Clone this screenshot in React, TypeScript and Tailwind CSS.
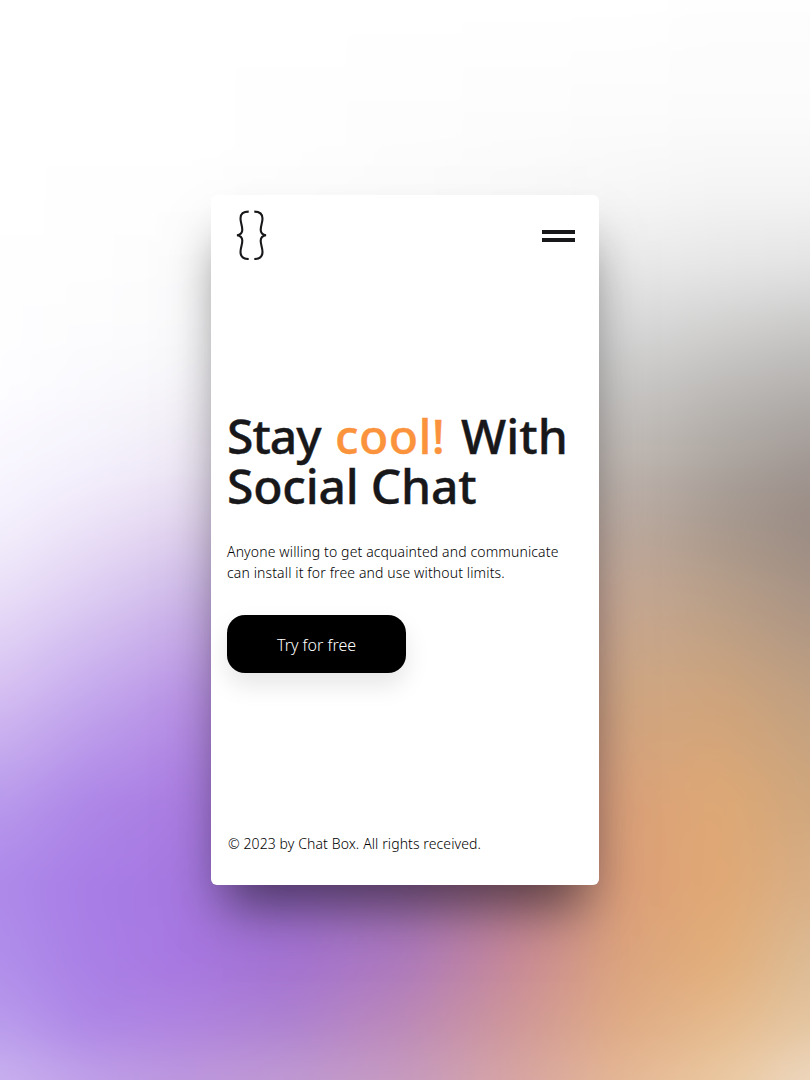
const columns = [0, 90, 180, 290, 405, 520, 620, 720, 810];

const rows: { y: number; colors: string[] }[] = [
  { y: 0, colors: ["#fff", "#fff", "#fff", "#fff", "#fff", "#fff", "#fff", "#fefefe", "#fefefe"] },
  { y: 135, colors: ["#fff", "#fff", "#fff", "#fefefe", "#fdfdfd", "#fcfcfc", "#fbfbfb", "#fafafa", "#fafafa"] },
  { y: 200, colors: ["#fff", "#fefefe", "#fefefe", "#fdfdfd", "#fbfbfb", "#f9f9f9", "#f6f6f6", "#f3f3f3", "#f3f3f3"] },
  { y: 270, colors: ["#fefefe", "#fefefe", "#fcfcfd", "#fafafa", "#f6f6f6", "#f1f1f1", "#e9e9e9", "#e5e5e5", "#e2e2e2"] },
  { y: 340, colors: ["#fefeff", "#fcfcfe", "#fafafc", "#f4f3f5", "#eeeeee", "#e4e4e4", "#d6d6d6", "#cdcccb", "#c4c3c2"] },
  { y: 400, colors: ["#fdfcff", "#f9f8fd", "#f6f4f9", "#eeeaf2", "#e2e0e3", "#d6d4d4", "#c8c6c4", "#b9b6b3", "#b0aca9"] },
  { y: 467, colors: ["#f8f6fe", "#f4f0fc", "#eee8f6", "#e4daec", "#d8cdd8", "#ccc2c2", "#c0b7b1", "#aca49e", "#a09691"] },
  { y: 500, colors: ["#f6f3fe", "#f0e9fa", "#e8def3", "#dfd1e9", "#d4c7d7", "#cbbdbd", "#bdb0a8", "#a79c94", "#9b8e88"] },
  { y: 540, colors: ["#f2edfb", "#e9def6", "#decfee", "#d8c2e6", "#ccb6d0", "#c6b0b2", "#bfab9e", "#ab998c", "#9c8d84"] },
  { y: 600, colors: ["#e9def8", "#dccbf2", "#ceb8ea", "#c8aadf", "#c5a3cb", "#c49fad", "#c8a994", "#b99f88", "#aa9485"] },
  { y: 700, colors: ["#d4bdf1", "#c3a7ed", "#b993e6", "#b484da", "#b580bf", "#c0889b", "#d0a782", "#cfa47c", "#c1a081"] },
  { y: 800, colors: ["#b99bec", "#ae87e7", "#aa7de2", "#aa76d8", "#ab77bf", "#bd8396", "#daa17a", "#dea875", "#cfa77d"] },
  { y: 880, colors: ["#ae89ea", "#a87de6", "#a678e1", "#a373d8", "#a876bc", "#bf8297", "#dc9f79", "#e0a874", "#d8ae85"] },
  { y: 960, colors: ["#b08eea", "#a97fe6", "#a777e1", "#a372d1", "#ad79bc", "#c88a96", "#dba37d", "#e2ae7a", "#dcbb95"] },
  { y: 1020, colors: ["#b89aec", "#ad85e6", "#ae82e0", "#ad80d0", "#bb88b7", "#cf9797", "#deaa84", "#e5b98c", "#e4c5a0"] },
  { y: 1080, colors: ["#c9b2ef", "#c0a0e8", "#bd98de", "#c09ad2", "#c79bbf", "#d8a6a2", "#e5b795", "#eac8a0", "#eed8c0"] },
];

function Backdrop() {
  return (
    <svg
      className="absolute inset-0 h-full w-full"
      viewBox="0 0 810 1080"
      preserveAspectRatio="none"
      aria-hidden="true"
    >
      <defs>
        {rows.map((row, i) => {
          const start = i === 0 ? -100 : rows[i - 1].y;
          return (
            <g key={row.y}>
              <linearGradient id={`tone${i}`} gradientUnits="userSpaceOnUse" x1="0" y1="0" x2="810" y2="0">
                {row.colors.map((color, j) => (
                  <stop key={j} offset={columns[j] / 810} stopColor={color} />
                ))}
              </linearGradient>
              <linearGradient id={`fade${i}`} gradientUnits="userSpaceOnUse" x1="0" y1={start} x2="0" y2={row.y}>
                <stop offset="0" stopColor="#fff" stopOpacity="0" />
                <stop offset="1" stopColor="#fff" />
              </linearGradient>
              <mask id={`mask${i}`} maskUnits="userSpaceOnUse" x="-100" y="-100" width="1010" height="1300" style={{ maskType: "alpha" }}>
                <rect x="-100" y={start} width="1010" height={1200 - start} fill={`url(#fade${i})`} />
              </mask>
            </g>
          );
        })}
        <filter id="soften" filterUnits="userSpaceOnUse" x="-100" y="-100" width="1010" height="1300" colorInterpolationFilters="sRGB">
          <feGaussianBlur stdDeviation="16" />
        </filter>
      </defs>
      <g filter="url(#soften)">
        <rect x="-100" y="-100" width="1010" height="1300" fill="#fff" />
        {rows.map((row, i) => (
          <rect
            key={row.y}
            x="-100"
            y="-100"
            width="1010"
            height="1300"
            fill={`url(#tone${i})`}
            mask={`url(#mask${i})`}
          />
        ))}
      </g>
    </svg>
  );
}

function Logo() {
  return (
    <svg className="h-[50px] w-8" viewBox="0 0 32 50" fill="none" stroke="#18181b" strokeWidth="2.1" aria-label="Chat Box">
      <path d="M12.7 1.6C7.4 1.6 4.5 3.4 4.5 8.6C4.5 12.8 6.3 15.8 6.3 19.8C6.3 23.1 4.3 24.9 1 25.3C4.3 25.7 6.3 27.5 6.3 30.8C6.3 34.8 4.5 37.8 4.5 42C4.5 47.2 7.4 49 12.7 49" />
      <path d="M18.3 1.6C23.6 1.6 26.5 3.4 26.5 8.6C26.5 12.8 24.7 15.8 24.7 19.8C24.7 23.1 26.7 24.9 30 25.3C26.7 25.7 24.7 27.5 24.7 30.8C24.7 34.8 26.5 37.8 26.5 42C26.5 47.2 23.6 49 18.3 49" />
    </svg>
  );
}

export default function App() {
  return (
    <div className="relative flex min-h-screen items-center justify-center overflow-hidden bg-white font-['Noto_Sans',sans-serif] text-[#18181b]">
      <Backdrop />
      <main className="relative flex h-[690px] w-[388px] flex-col rounded-[6px] bg-white shadow-[0_34px_50px_-12px_rgba(0,0,0,0.55)]">
        <header className="flex h-20 items-center justify-between pr-6 pl-[25px]">
          <Logo />
          <button className="mt-[2px] flex w-[33px] flex-col gap-1" aria-label="Menu">
            <span className="h-1 w-full bg-[#18181b]" />
            <span className="h-1 w-full bg-[#18181b]" />
          </button>
        </header>
        <section className="flex flex-1 flex-col items-start px-4 pt-[136px]">
          <h1 className="flex flex-col text-[48px] leading-[50px] font-medium whitespace-nowrap [-webkit-text-stroke:0.4px_currentColor]">
            <span className="flex">
              <span className="w-[108px] tracking-[-1px]">Stay </span>
              <span className="w-[126px] tracking-[0.4px] text-[#fb923c]">cool! </span>
              <span className="tracking-[0.1px]">With</span>
            </span>
            <span className="tracking-[-0.2px]">Social Chat</span>
          </h1>
          <p className="mt-[30px] text-[14px] leading-[21px] font-light tracking-[0.13px] whitespace-nowrap text-black">
            Anyone willing to get acquainted and communicate
            <br />
            can install it for free and use without limits.
          </p>
          <button className="mt-8 h-[58px] w-[179px] rounded-[18px] bg-black pt-[2px] text-base font-light text-white shadow-[0_12px_24px_rgba(0,0,0,0.1)]">
            Try for free
          </button>
        </section>
        <footer className="pr-4 pb-[31px] pl-[17px] text-[14px] leading-[21px] font-light tracking-[0.1px] text-black">
          © 2023 by Chat Box. All rights received.
        </footer>
      </main>
    </div>
  );
}
